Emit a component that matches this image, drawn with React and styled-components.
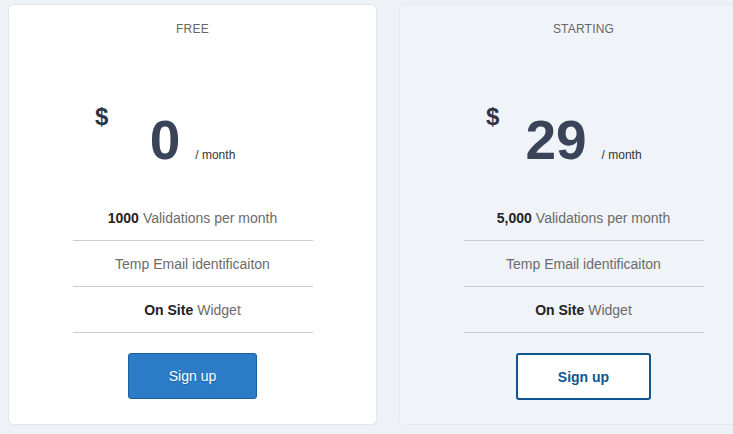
import React from 'react';
import styled, { createGlobalStyle } from 'styled-components';

const GlobalStyle = createGlobalStyle`
	html, body {
		margin: 0;
		padding: 0;
		background: #eef2f6;
		font-family: 'Liberation Sans', Arial, sans-serif;
		overflow: hidden;
	}
`;

const plans = [
	{
		name: 'FREE',
		price: '0',
		validations: '1000',
		highlight: true,
	},
	{
		name: 'STARTING',
		price: '29',
		validations: '5,000',
		highlight: false,
	},
];

const Page = styled.div`
	display: flex;
	gap: 22px;
	padding: 4px 0 0 8px;
	width: 800px;
`;

const Card = styled.div`
	flex: 0 0 369px;
	height: 421px;
	box-sizing: border-box;
	border: 1px solid ${(p) => (p.$highlight ? '#e1e5ea' : '#e6eaee')};
	border-radius: 6px;
	background: ${(p) => (p.$highlight ? '#ffffff' : '#f0f3f7')};
	display: flex;
	flex-direction: column;
	align-items: center;
	padding-top: 16px;
`;

const Title = styled.div`
	font-size: 12px;
	line-height: 16px;
	color: #666;
	letter-spacing: 0.2px;
`;

const PriceRow = styled.div`
	position: relative;
	align-self: stretch;
	display: flex;
	justify-content: center;
	align-items: baseline;
	gap: 15px;
	margin-top: 76px;
	height: 56px;
`;

const Currency = styled.span`
	position: absolute;
	left: 86px;
	top: -8px;
	font-size: 24px;
	line-height: 1;
	font-weight: 700;
	color: #2c3445;
`;

const Amount = styled.span`
	font-size: 55px;
	line-height: 1;
	font-weight: 700;
	color: #3a4458;
`;

const Period = styled.span`
	font-size: 12px;
	color: #333;
`;

const Features = styled.ul`
	list-style: none;
	margin: 26px 0 0;
	padding: 0;
	width: 240px;
`;

const Feature = styled.li`
	height: 46px;
	box-sizing: border-box;
	border-bottom: 1px solid #c9cdd2;
	display: flex;
	align-items: center;
	justify-content: center;
	font-size: 14px;
	color: #6b6b6b;
	padding-top: 1px;

	b {
		color: #222;
		margin-right: 4px;
	}
`;

const Button = styled.button`
	font-family: inherit;
	font-size: 14px;
	border-radius: 3px;
	cursor: pointer;
	width: ${(p) => (p.$primary ? '129px' : '135px')};
	height: ${(p) => (p.$primary ? '46px' : '47px')};
	background: ${(p) => (p.$primary ? '#2b7bc7' : '#ffffff')};
	border: ${(p) => (p.$primary ? '1px solid #1b5f9f' : '2px solid #0e5592')};
	color: ${(p) => (p.$primary ? '#ffffff' : '#0e5592')};
	font-weight: ${(p) => (p.$primary ? 400 : 700)};
	text-shadow: ${(p) => (p.$primary ? '0 1px 1px rgba(0,0,0,0.25)' : 'none')};
	margin-top: 20px;
`;

const PlanCard = ({ plan }) => (
	<Card $highlight={plan.highlight}>
		<Title>{plan.name}</Title>
		<PriceRow>
			<Currency>$</Currency>
			<Amount>{plan.price}</Amount>
			<Period>/ month</Period>
		</PriceRow>
		<Features>
			<Feature>
				<b>{plan.validations}</b> Validations per month
			</Feature>
			<Feature>Temp Email identificaiton</Feature>
			<Feature>
				<b>On Site</b> Widget
			</Feature>
		</Features>
		<Button $primary={plan.highlight}>Sign up</Button>
	</Card>
);

const App = () => (
	<>
		<GlobalStyle />
		<Page>
			{plans.map((plan) => (
				<PlanCard key={plan.name} plan={plan} />
			))}
		</Page>
	</>
);

export default App;
